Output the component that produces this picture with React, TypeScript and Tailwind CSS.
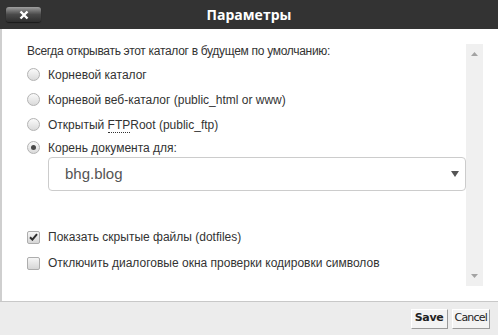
import type { FC } from "react";

const Radio: FC<{ checked?: boolean; label: React.ReactNode }> = ({ checked, label }) => (
  <label className="flex h-[25px] items-center">
    <span className="flex h-[13px] w-[13px] items-center justify-center rounded-full border border-[#b3b3b3] bg-gradient-to-b from-[#fafafa] to-[#dadada]">
      {checked && <span className="h-[5px] w-[5px] rounded-full bg-[#4a4a4a]" />}
    </span>
    <span className="ml-[8px]">{label}</span>
  </label>
);

const Check: FC<{ checked?: boolean; label: string }> = ({ checked, label }) => (
  <label className="flex h-[26px] items-center">
    <span className="flex h-[13px] w-[13px] items-center justify-center rounded-[2px] border border-[#adadad] bg-gradient-to-b from-[#f6f6f6] to-[#d6d6d6]">
      {checked && (
        <svg width="9" height="8" viewBox="0 0 9 8">
          <path d="M1 4.2 L3.4 6.6 L8 1.2" fill="none" stroke="#2f2f2f" strokeWidth="2" />
        </svg>
      )}
    </span>
    <span className="ml-[8px]">{label}</span>
  </label>
);

const App: FC = () => {
  return (
    <div className="flex h-[335px] w-[498px] flex-col overflow-hidden bg-white font-['Liberation_Sans',Arial,sans-serif] text-[12px] text-[#333]">
      {/* title bar */}
      <div className="grid h-[29px] grid-cols-[1fr_auto_1fr] items-center bg-[#333]">
        <div className="pl-[6px]">
          <button className="flex h-[15px] w-[35px] items-center justify-center rounded-[3px] bg-gradient-to-b from-[#a0a0a0] via-[#4a4a4a] to-[#2e2e2e] shadow-[0_1px_1px_#1a1a1a]">
            <svg width="10" height="10" viewBox="0 0 10 10">
              <path d="M1.5 1.5 L8.5 8.5 M8.5 1.5 L1.5 8.5" stroke="#fff" strokeWidth="2.4" />
            </svg>
          </button>
        </div>
        <div className="font-['Open_Sans',sans-serif] text-[14px] font-bold text-white">Параметры</div>
        <div />
      </div>

      {/* body */}
      <div className="flex flex-1 border-l-2 border-[#cfcfcf] py-[15px] pr-[15px]">
        <div className="flex flex-1 flex-col pl-[25px]">
          <div className="h-[15px] leading-[15px] tracking-[-0.3px]">Всегда открывать этот каталог в будущем по умолчанию:</div>
          <div className="mt-[3px] flex flex-col">
            <Radio label="Корневой каталог" />
            <Radio label="Корневой веб-каталог (public_html or www)" />
            <Radio
              label={
                <>
                  Открытый <span className="border-b border-dotted border-[#333] leading-[12px]">FTP</span>Root (public_ftp)
                </>
              }
            />
            <div className="-mt-[2px]">
              <Radio checked label="Корень документа для:" />
            </div>
          </div>
          <div className="ml-[21px] -mt-[3px] flex h-[34px] items-center justify-between rounded-[4px] border border-[#cccccc] pl-[16px] pr-[6px]">
            <span className="text-[15px] text-[#555]">bhg.blog</span>
            <svg width="8" height="6" viewBox="0 0 8 6">
              <path d="M0 0 H8 L4 6 Z" fill="#555" />
            </svg>
          </div>
          <div className="mt-[33px] flex flex-col">
            <Check checked label="Показать скрытые файлы (dotfiles)" />
            <Check label="Отключить диалоговые окна проверки кодировки символов" />
          </div>
        </div>
        {/* scrollbar */}
        <div className="flex w-[17px] flex-col items-center justify-between bg-[#f0f0f0] py-[8px]">
          <svg width="7" height="4" viewBox="0 0 7 4">
            <path d="M0 4 H7 L3.5 0 Z" fill="#a3a3a3" />
          </svg>
          <svg width="7" height="4" viewBox="0 0 7 4">
            <path d="M0 0 H7 L3.5 4 Z" fill="#a3a3a3" />
          </svg>
        </div>
      </div>

      {/* footer */}
      <div className="flex h-[34px] items-center justify-end gap-[4px] border-t border-[#c8c8c8] bg-[#ececec] pr-[8px] font-['DejaVu_Sans',Verdana,sans-serif] text-[11px] text-[#222]">
        <button className="h-[20px] border border-t-white border-l-white border-r-[#9a9a9a] border-b-[#9a9a9a] bg-[#f3f3f3] px-[3px] font-bold tracking-[-0.3px]">
          Save
        </button>
        <button className="h-[20px] border border-t-white border-l-white border-r-[#9a9a9a] border-b-[#9a9a9a] bg-[#f3f3f3] px-[2px] tracking-[-0.8px]">
          Cancel
        </button>
      </div>
    </div>
  );
};

export default App;
